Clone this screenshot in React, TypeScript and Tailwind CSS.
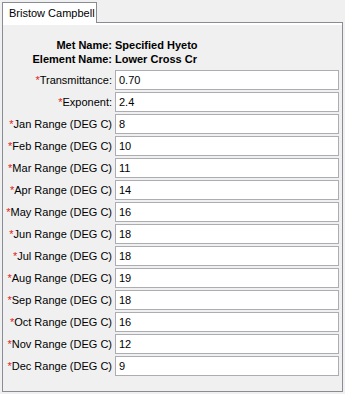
import React from "react";

type Field = {
    label: string;
    value: string;
};

const fields: Field[] = [
    {label: "Transmittance:", value: "0.70"},
    {label: "Exponent:", value: "2.4"},
    {label: "Jan Range (DEG C)", value: "8"},
    {label: "Feb Range (DEG C)", value: "10"},
    {label: "Mar Range (DEG C)", value: "11"},
    {label: "Apr Range (DEG C)", value: "14"},
    {label: "May Range (DEG C)", value: "16"},
    {label: "Jun Range (DEG C)", value: "18"},
    {label: "Jul Range (DEG C)", value: "18"},
    {label: "Aug Range (DEG C)", value: "19"},
    {label: "Sep Range (DEG C)", value: "18"},
    {label: "Oct Range (DEG C)", value: "16"},
    {label: "Nov Range (DEG C)", value: "12"},
    {label: "Dec Range (DEG C)", value: "9"},
];

const FieldRow: React.FC<{field: Field}> = ({field}) => {
    return (
        <div className="flex items-center h-[20px]">
            <div className="w-[109px] text-right whitespace-nowrap">
                <span className="text-[#e02020]">*</span>
                {field.label}
            </div>
            <div className="ml-[3px] w-[224px] h-[20px] bg-white border border-[#abadb3] flex items-center pl-[3px]">
                {field.value}
            </div>
        </div>
    );
};

export default function App() {
    return (
        <div
            className="w-[345px] h-[394px] bg-[#f0f0f0] text-[11px] text-black pt-[2px] pl-[2px] pr-[2px]"
            style={{fontFamily: "'Liberation Sans', Arial, sans-serif"}}
        >
            <div className="flex">
                <div className="h-[21px] w-[95px] bg-white border border-b-0 border-[#898c95] flex items-center pl-[6px] whitespace-nowrap relative z-10">
                    Bristow Campbell
                </div>
            </div>
            <div className="-mt-[1px] w-[341px] h-[370px] border border-[#898c95] bg-[#f0f0f0]">
                <div className="h-[2px] bg-white"></div>
                <div className="pt-[13px] font-bold leading-[14px]">
                    <div className="flex">
                        <div className="w-[109px] text-right">Met Name:</div>
                        <div className="ml-[3px]">Specified Hyeto</div>
                    </div>
                    <div className="flex">
                        <div className="w-[109px] text-right">Element Name:</div>
                        <div className="ml-[3px]">Lower Cross Cr</div>
                    </div>
                </div>
                <div className="mt-[4px] flex flex-col gap-[2px]">
                    {fields.map(f => (
                        <FieldRow key={f.label} field={f}/>
                    ))}
                </div>
            </div>
        </div>
    );
}
